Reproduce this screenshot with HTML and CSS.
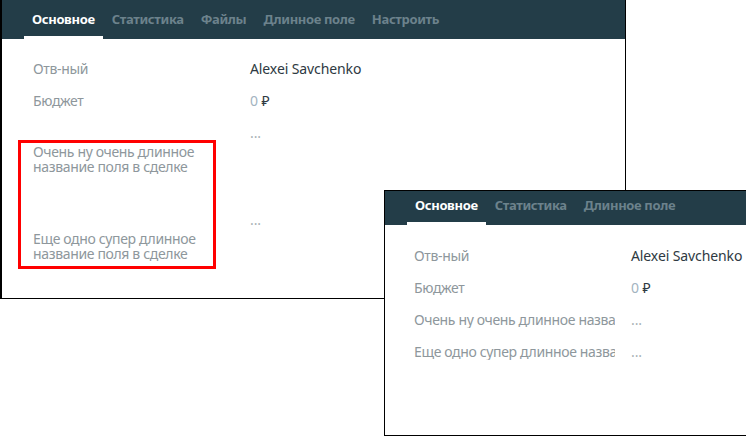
FILE: index.html
```html
<!DOCTYPE html>
<html lang="ru">
<head>
<meta charset="utf-8">
<title>Card</title>
<link rel="stylesheet" href="styles.css">
</head>
<body>
<div class="win win--back">
  <div class="tabs tabs--tall">
    <span class="tab tab--active">Основное</span>
    <span class="tab">Статистика</span>
    <span class="tab">Файлы</span>
    <span class="tab">Длинное поле</span>
    <span class="tab">Настроить</span>
  </div>
  <div class="fields">
    <div class="row"><div class="label">Отв-ный</div><div class="value">Alexei Savchenko</div></div>
    <div class="row"><div class="label">Бюджет</div><div class="value"><span class="zero">0</span> ₽</div></div>
    <div class="row"><div class="label label--wrap">Очень ну очень длинное название поля в сделке</div><div class="value value--muted">...</div></div>
    <div class="row"><div class="label label--wrap">Еще одно супер длинное название поля в сделке</div><div class="value value--muted">...</div></div>
  </div>
</div>
<div class="highlight"></div>
<div class="win win--front">
  <div class="tabs">
    <span class="tab tab--active">Основное</span>
    <span class="tab">Статистика</span>
    <span class="tab">Длинное поле</span>
  </div>
  <div class="fields fields--front">
    <div class="row"><div class="label">Отв-ный</div><div class="value">Alexei Savchenko</div></div>
    <div class="row"><div class="label">Бюджет</div><div class="value"><span class="zero">0</span> ₽</div></div>
    <div class="row"><div class="label label--clip">Очень ну очень длинное название поля в сделке</div><div class="value value--muted">...</div></div>
    <div class="row"><div class="label label--clip">Еще одно супер длинное название поля в сделке</div><div class="value value--muted">...</div></div>
  </div>
</div>
</body>
</html>
```
FILE: styles.css
```css
html, body {
  margin: 0;
  padding: 0;
  background: #fff;
  width: 746px;
  height: 447px;
  overflow: hidden;
  position: relative;
  font-family: "Noto Sans", "Open Sans", sans-serif;
}

.win {
  position: absolute;
  background: #fff;
  border: 1px solid #000;
  box-sizing: border-box;
}

.win--back {
  left: 0;
  top: 0;
  width: 626px;
  height: 299px;
  border-top: none;
  border-left-width: 2px;
}

.win--front {
  left: 384px;
  top: 190px;
  width: 420px;
  height: 246px;
}

.tabs {
  background: #233d48;
  height: 34px;
  display: flex;
  align-items: flex-end;
  padding-left: 21.5px;
}

.tabs--tall {
  height: 39px;
}

.tab {
  font-size: 13px;
  font-weight: 700;
  color: #6c828c;
  padding: 0 8.5px 9px;
  line-height: 16px;
  border-bottom: 3px solid transparent;
  letter-spacing: -0.35px;
}

.tab--active {
  color: #fff;
  border-bottom-color: #fff;
}

.fields {
  padding: 22px 0 0 31px;
  display: flex;
  flex-direction: column;
  gap: 16px;
}

.fields--front {
  padding-top: 23px;
  padding-left: 29px;
}

.row {
  display: flex;
  align-items: flex-start;
  gap: 16px;
  font-size: 14px;
  line-height: 16px;
}

.label {
  width: 201px;
  flex: none;
  color: #8e979c;
  white-space: nowrap;
  letter-spacing: -0.35px;
}

.label--clip {
  overflow: hidden;
}

.label--wrap {
  white-space: normal;
  line-height: 15px;
  padding: 19px 0 22px;
}

.value {
  color: #2e3942;
  letter-spacing: -0.1px;
}

.value--muted {
  color: #a9b1b6;
}

.zero {
  color: #a3b3bf;
}

.highlight {
  position: absolute;
  left: 18px;
  top: 140px;
  width: 198px;
  height: 129px;
  box-sizing: border-box;
  border: 3px solid #ff0000;
}
```
